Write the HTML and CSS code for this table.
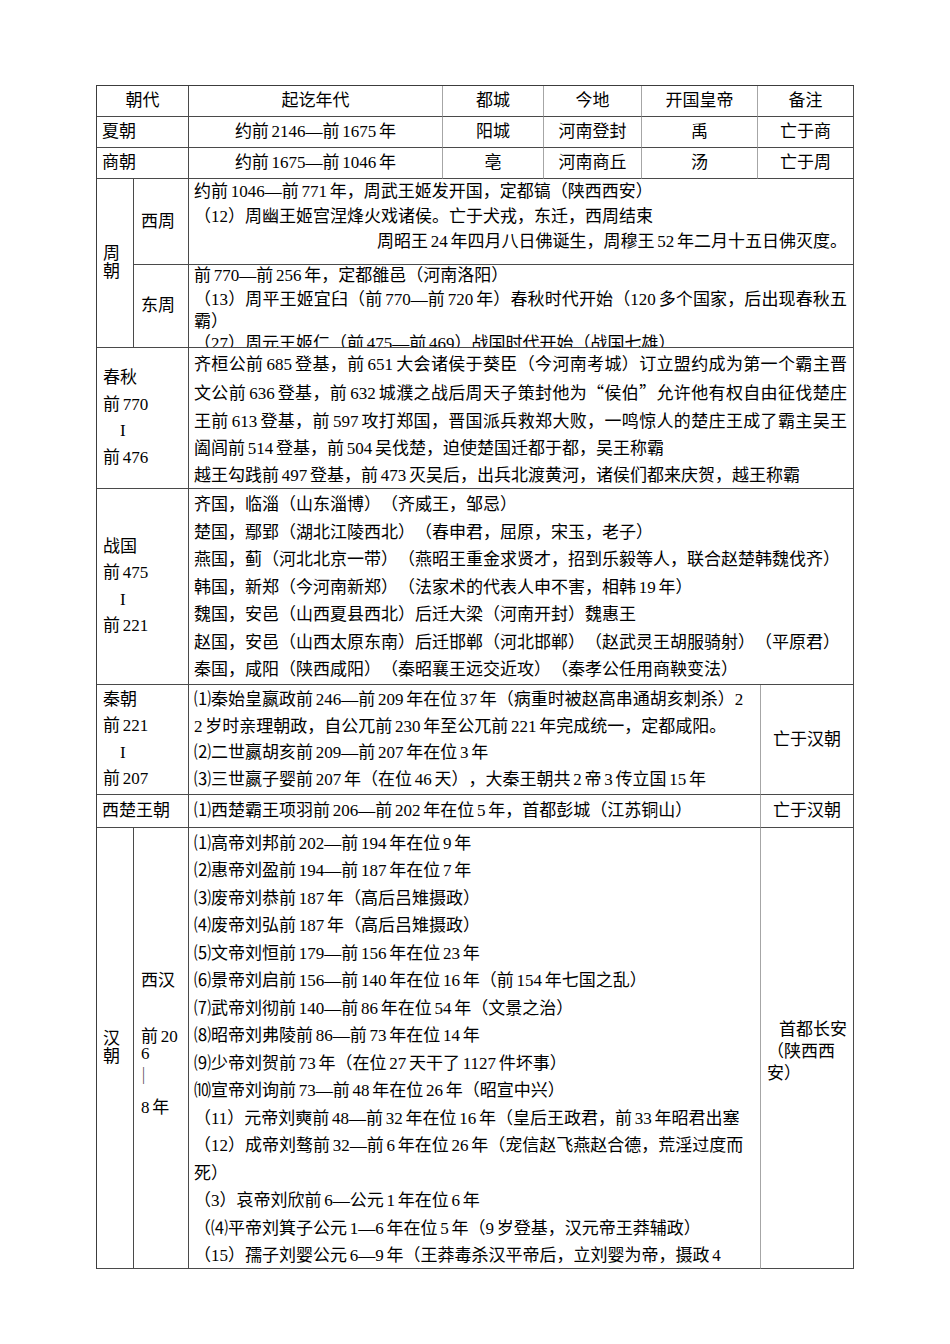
FILE: index.html
```html
<!DOCTYPE html>
<html lang="zh-CN">
<head>
<meta charset="utf-8">
<title>中国历代朝代表</title>
<link rel="stylesheet" href="styles.css">
</head>
<body>
<table class="dyn">
<colgroup>
<col class="c1"><col class="c2"><col class="c3"><col class="c4"><col class="c5"><col class="c6"><col class="c7"><col class="c8">
</colgroup>
<tr>
<td colspan="2" class="ctr"><div class="one h30">朝代</div></td>
<td class="ctr lv">起讫年代</td>
<td class="ctr lv">都城</td>
<td class="ctr lv">今地</td>
<td class="ctr lv">开国皇帝</td>
<td colspan="2" class="ctr">备注</td>
</tr>
<tr>
<td colspan="2"><div class="one h30 lab0">夏朝</div></td>
<td class="ctr lv">约前 2146—前 1675 年</td>
<td class="ctr lv">阳城</td>
<td class="ctr lv">河南登封</td>
<td class="ctr lv">禹</td>
<td colspan="2" class="ctr">亡于商</td>
</tr>
<tr>
<td colspan="2"><div class="one h30 lab0">商朝</div></td>
<td class="ctr lv">约前 1675—前 1046 年</td>
<td class="ctr lv">亳</td>
<td class="ctr lv">河南商丘</td>
<td class="ctr lv">汤</td>
<td colspan="2" class="ctr">亡于周</td>
</tr>
<tr>
<td rowspan="2"><div class="vlab">周朝</div></td>
<td><div class="lab2">西周</div></td>
<td colspan="6" class="top">
<div class="ct h85 xizhou">
<div class="ln">约前 1046—前 771 年，周武王姬发开国，定都镐（陕西西安）</div>
<div class="ln">（12）周幽王姬宫涅烽火戏诸侯。亡于犬戎，东迁，西周结束</div>
<div class="ln rt">周昭王 24 年四月八日佛诞生，周穆王 52 年二月十五日佛灭度。</div>
</div>
</td>
</tr>
<tr>
<td><div class="lab2">东周</div></td>
<td colspan="6" class="top">
<div class="ct h82 dongzhou">
<div class="ln">前 770—前 256 年，定都雒邑（河南洛阳）</div>
<div class="para2">
<div class="jl">（13）周平王姬宜臼（前 770—前 720 年）春秋时代开始（120 多个国家，后出现春秋五</div>
<div class="ln">霸）</div>
</div>
<div class="ln">（27）周元王姬仁（前 475—前 469）战国时代开始（战国七雄）</div>
</div>
</td>
</tr>
<tr>
<td colspan="2"><div class="lab">
<div>春秋</div><div>前 770</div><div>　I</div><div>前 476</div>
</div></td>
<td colspan="6" class="top">
<div class="ct h140 chunqiu">
<div class="jl">齐桓公前 685 登基，前 651 大会诸侯于葵臣（今河南考城）订立盟约成为第一个霸主晋</div>
<div class="jl">文公前 636 登基，前 632 城濮之战后周天子策封他为<span class="q">“</span>侯伯<span class="q">”</span>允许他有权自由征伐楚庄</div>
<div class="jl">王前 613 登基，前 597 攻打郑国，晋国派兵救郑大败，一鸣惊人的楚庄王成了霸主吴王</div>
<div class="ln">阖闾前 514 登基，前 504 吴伐楚，迫使楚国迁都于都，吴王称霸</div>
<div class="ln">越王勾践前 497 登基，前 473 灭吴后，出兵北渡黄河，诸侯们都来庆贺，越王称霸</div>
</div>
</td>
</tr>
<tr>
<td colspan="2"><div class="lab">
<div>战国</div><div>前 475</div><div>　I</div><div>前 221</div>
</div></td>
<td colspan="6" class="top">
<div class="ct h195 zhanguo">
<div class="ln">齐国，临淄（山东淄博）（齐威王，邹忌）</div>
<div class="ln">楚国，鄢郢（湖北江陵西北）（春申君，屈原，宋玉，老子）</div>
<div class="ln">燕国，蓟（河北北京一带）（燕昭王重金求贤才，招到乐毅等人，联合赵楚韩魏伐齐）</div>
<div class="ln">韩国，新郑（今河南新郑）（法家术的代表人申不害，相韩 19 年）</div>
<div class="ln">魏国，安邑（山西夏县西北）后迁大梁（河南开封）魏惠王</div>
<div class="ln">赵国，安邑（山西太原东南）后迁邯郸（河北邯郸）（赵武灵王胡服骑射）（平原君）</div>
<div class="ln">秦国，咸阳（陕西咸阳）（秦昭襄王远交近攻）（秦孝公任用商鞅变法）</div>
</div>
</td>
</tr>
<tr>
<td colspan="2"><div class="lab">
<div>秦朝</div><div>前 221</div><div>　I</div><div>前 207</div>
</div></td>
<td colspan="5" class="top lv">
<div class="ct h109 qin">
<div class="ln">⑴秦始皇嬴政前 246—前 209 年在位 37 年（病重时被赵高串通胡亥刺杀）2</div>
<div class="ln">2 岁时亲理朝政，自公兀前 230 年至公兀前 221 年完成统一，定都咸阳。</div>
<div class="ln">⑵二世嬴胡亥前 209—前 207 年在位 3 年</div>
<div class="ln">⑶三世嬴子婴前 207 年（在位 46 天），大秦王朝共 2 帝 3 传立国 15 年</div>
</div>
</td>
<td class="ctr">亡于汉朝</td>
</tr>
<tr>
<td colspan="2"><div class="one lab0">西楚王朝</div></td>
<td colspan="5" class="lv">
<div class="ct h32 one">⑴西楚霸王项羽前 206—前 202 年在位 5 年，首都彭城（江苏铜山）</div>
</td>
<td class="ctr">亡于汉朝</td>
</tr>
<tr>
<td><div class="vlab">汉朝</div></td>
<td class="top"><div class="xihan">
<div class="xh-a">西汉</div>
<div class="xh-b">前 20</div>
<div class="xh-b">6</div>
<div class="xh-b bar">｜</div>
<div class="xh-c">8 年</div>
</div></td>
<td colspan="5" class="top lv">
<div class="ct h440 han">
<div class="ln">⑴高帝刘邦前 202—前 194 年在位 9 年</div>
<div class="ln">⑵惠帝刘盈前 194—前 187 年在位 7 年</div>
<div class="ln">⑶废帝刘恭前 187 年（高后吕雉摄政）</div>
<div class="ln">⑷废帝刘弘前 187 年（高后吕雉摄政）</div>
<div class="ln">⑸文帝刘恒前 179—前 156 年在位 23 年</div>
<div class="ln">⑹景帝刘启前 156—前 140 年在位 16 年（前 154 年七国之乱）</div>
<div class="ln">⑺武帝刘彻前 140—前 86 年在位 54 年（文景之治）</div>
<div class="ln">⑻昭帝刘弗陵前 86—前 73 年在位 14 年</div>
<div class="ln">⑼少帝刘贺前 73 年（在位 27 天干了 1127 件坏事）</div>
<div class="ln">⑽宣帝刘询前 73—前 48 年在位 26 年（昭宣中兴）</div>
<div class="ln">（11）元帝刘奭前 48—前 32 年在位 16 年（皇后王政君，前 33 年昭君出塞</div>
<div class="ln">（12）成帝刘骜前 32—前 6 年在位 26 年（宠信赵飞燕赵合德，荒淫过度而</div>
<div class="ln">死）</div>
<div class="ln">（3）哀帝刘欣前 6—公元 1 年在位 6 年</div>
<div class="ln">（⑷平帝刘箕子公元 1—6 年在位 5 年（9 岁登基，汉元帝王莽辅政）</div>
<div class="ln">（15）孺子刘婴公元 6—9 年（王莽毒杀汉平帝后，立刘婴为帝，摄政 4</div>
</div>
</td>
<td><div class="capital">
<div class="cap1">首都长安</div>
<div>（陕西西安）</div>
</div></td>
</tr>
</table>
</body>
</html>
```

FILE: styles.css
```css
html, body {
  margin: 0;
  padding: 0;
  background: #ffffff;
}

body {
  font-family: "Liberation Serif", "Noto Sans CJK SC", serif;
  font-size: 17px;
  color: #000000;
}

.dyn {
  border-collapse: separate;
  border-spacing: 0;
  table-layout: fixed;
  width: 758px;
  margin: 85px 0 0 96px;
  border-top: 1px solid #3c3c3c;
  border-left: 1px solid #3c3c3c;
  word-spacing: -1.5px;
  text-spacing-trim: space-all;
  line-height: 24px;
}

.c1 { width: 37px; }
.c2 { width: 55px; }
.c3 { width: 254px; }
.c4 { width: 101px; }
.c5 { width: 98px; }
.c6 { width: 116px; }
.c7 { width: 3px; }
.c8 { width: 93px; }

.dyn td {
  padding: 0;
  border-right: 1px solid #4a4a4a;
  border-bottom: 1px solid #4a4a4a;
  vertical-align: middle;
  overflow: hidden;
}

.dyn td.lv {
  border-right-color: #a6a6a6;
}

.dyn td.top {
  vertical-align: top;
}

.ctr {
  text-align: center;
  white-space: nowrap;
}

.one {
  white-space: nowrap;
}

.h30 { height: 30px; line-height: 30px; }
.h32 { height: 32px; line-height: 32px; }
.h85 { height: 85px; }
.h82 { height: 82px; overflow: hidden; }
.h140 { height: 140px; }
.h195 { height: 195px; }
.h109 { height: 109px; }
.h440 { height: 440px; }

.lab0 {
  padding-left: 5px;
}

.lab {
  padding-left: 6px;
  line-height: 26.5px;
  white-space: nowrap;
}

.vlab {
  padding-left: 6px;
  line-height: 18px;
}

.lab2 {
  padding-left: 7px;
}

.ct {
  box-sizing: border-box;
  padding-left: 5px;
  padding-right: 6px;
}

.ln {
  white-space: nowrap;
}

.jl {
  text-align: justify;
  text-align-last: justify;
}

.rt {
  text-align: right;
}

.q {
  font-family: "Noto Sans CJK SC", sans-serif;
}

.xizhou {
  line-height: 25px;
}

.dongzhou {
  line-height: 22px;
}

.para2 {
  margin-top: 2px;
}

.chunqiu {
  padding-top: 3px;
  line-height: 27.3px;
}

.zhanguo {
  padding-top: 2px;
  line-height: 27.5px;
}

.qin {
  padding-top: 2px;
  line-height: 26.5px;
}

.han {
  padding-top: 1.5px;
  line-height: 27.5px;
}

.xihan {
  padding: 140px 0 0 7px;
  white-space: nowrap;
}

.xh-a {
  line-height: 26px;
}

.xh-b {
  line-height: 17px;
}

.xh-a + .xh-b {
  margin-top: 34px;
}

.bar {
  font-family: "Noto Sans CJK SC", sans-serif;
  color: #333333;
  margin-left: -6px;
  margin-top: 4px;
}

.xh-c {
  margin-top: 12px;
  line-height: 26px;
}

.capital {
  padding: 8px 6px 0 6px;
  line-height: 22px;
}

.cap1 {
  text-indent: 12px;
  white-space: nowrap;
}
```
